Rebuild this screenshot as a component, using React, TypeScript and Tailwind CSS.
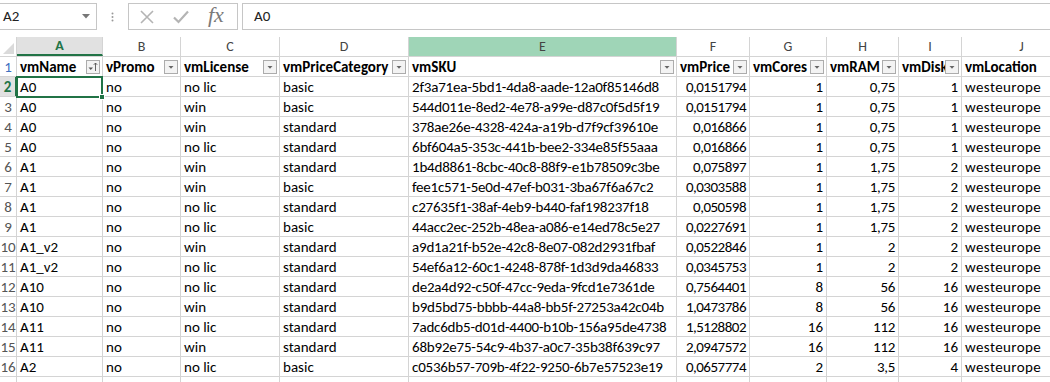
import React from 'react';

type Row = [string, string, string, string, string, string, string, string, string, string];

const rows: Row[] = [
  ['A0', 'no', 'no lic', 'basic', '2f3a71ea-5bd1-4da8-aade-12a0f85146d8', '0,0151794', '1', '0,75', '1', 'westeurope'],
  ['A0', 'no', 'win', 'basic', '544d011e-8ed2-4e78-a99e-d87c0f5d5f19', '0,0151794', '1', '0,75', '1', 'westeurope'],
  ['A0', 'no', 'win', 'standard', '378ae26e-4328-424a-a19b-d7f9cf39610e', '0,016866', '1', '0,75', '1', 'westeurope'],
  ['A0', 'no', 'no lic', 'standard', '6bf604a5-353c-441b-bee2-334e85f55aaa', '0,016866', '1', '0,75', '1', 'westeurope'],
  ['A1', 'no', 'win', 'standard', '1b4d8861-8cbc-40c8-88f9-e1b78509c3be', '0,075897', '1', '1,75', '2', 'westeurope'],
  ['A1', 'no', 'win', 'basic', 'fee1c571-5e0d-47ef-b031-3ba67f6a67c2', '0,0303588', '1', '1,75', '2', 'westeurope'],
  ['A1', 'no', 'no lic', 'standard', 'c27635f1-38af-4eb9-b440-faf198237f18', '0,050598', '1', '1,75', '2', 'westeurope'],
  ['A1', 'no', 'no lic', 'basic', '44acc2ec-252b-48ea-a086-e14ed78c5e27', '0,0227691', '1', '1,75', '2', 'westeurope'],
  ['A1_v2', 'no', 'win', 'standard', 'a9d1a21f-b52e-42c8-8e07-082d2931fbaf', '0,0522846', '1', '2', '2', 'westeurope'],
  ['A1_v2', 'no', 'no lic', 'standard', '54ef6a12-60c1-4248-878f-1d3d9da46833', '0,0345753', '1', '2', '2', 'westeurope'],
  ['A10', 'no', 'no lic', 'standard', 'de2a4d92-c50f-47cc-9eda-9fcd1e7361de', '0,7564401', '8', '56', '16', 'westeurope'],
  ['A10', 'no', 'win', 'standard', 'b9d5bd75-bbbb-44a8-bb5f-27253a42c04b', '1,0473786', '8', '56', '16', 'westeurope'],
  ['A11', 'no', 'no lic', 'standard', '7adc6db5-d01d-4400-b10b-156a95de4738', '1,5128802', '16', '112', '16', 'westeurope'],
  ['A11', 'no', 'win', 'standard', '68b92e75-54c9-4b37-a0c7-35b38f639c97', '2,0947572', '16', '112', '16', 'westeurope'],
  ['A2', 'no', 'no lic', 'basic', 'c0536b57-709b-4f22-9250-6b7e57523e19', '0,0657774', '2', '3,5', '4', 'westeurope'],
];

const fields = ['vmName', 'vPromo', 'vmLicense', 'vmPriceCategory', 'vmSKU', 'vmPrice', 'vmCores', 'vmRAM', 'vmDisk', 'vmLocation'];
const letters = ['A', 'B', 'C', 'D', 'E', 'F', 'G', 'H', 'I', 'J'];
const widths = ['w-[86px]', 'w-[78px]', 'w-[99px]', 'w-[129px]', 'w-[268px]', 'w-[73px]', 'w-[77px]', 'w-[72px]', 'w-[63px]', 'w-[120px]'];
const rightAligned = [false, false, false, false, false, true, true, true, true, false];
// small tracking fixes so Lato lines up with the original widths
const tracking = ['', '', '', '', 'tracking-[-0.2px]', 'tracking-[-0.5px]', '', 'tracking-[-0.3px]', '', 'tracking-[0.4px]'];

const FilterButton: React.FC<{ sorted?: boolean }> = ({ sorted }) => (
  <div className="absolute right-[2px] top-[3px] w-[14px] h-[14px] border border-[#acacac] bg-[#f3f3f3] flex items-center justify-center">
    <svg width="12" height="12" viewBox="0 0 12 12">
      {sorted ? (
        <>
          <path d="M1.5 6.5 L6 6.5 L3.75 9 Z" fill="#555" />
          <path d="M8.5 2 L8.5 10 M6.8 3.8 L8.5 2 L10.2 3.8" stroke="#555" strokeWidth="0.9" fill="none" />
        </>
      ) : (
        <path d="M3.5 5 L8.5 5 L6 7.8 Z" fill="#666" />
      )}
    </svg>
  </div>
);

export default function App() {
  return (
    <div className="w-[1050px] h-[382px] overflow-hidden bg-white font-['Carlito','Lato',sans-serif] text-[15px] text-black">
      {/* formula bar */}
      <div className="flex items-center h-[33px] pt-[3px] pb-[3px]">
        <div className="relative w-[97px] h-[27px] border border-l-0 border-[#c6c6c6] flex items-center pl-[3px] text-[15px] text-[#222]">
          A2
          <svg className="absolute right-[6px] top-[10px]" width="8" height="5" viewBox="0 0 8 5">
            <path d="M0 0 L8 0 L4 4.5 Z" fill="#777" />
          </svg>
        </div>
        <div className="w-[31px] flex justify-center">
          <svg width="3" height="10" viewBox="0 0 3 10">
            <circle cx="1.5" cy="1.5" r="1" fill="#999" />
            <circle cx="1.5" cy="5" r="1" fill="#999" />
            <circle cx="1.5" cy="8.5" r="1" fill="#999" />
          </svg>
        </div>
        <div className="w-[110px] h-[27px] border border-[#c6c6c6] flex items-center pl-[11px] gap-[19px]">
          <svg width="14" height="14" viewBox="0 0 14 14">
            <path d="M1 1 L13 13 M13 1 L1 13" stroke="#b4b4b4" strokeWidth="1.6" />
          </svg>
          <svg width="16" height="14" viewBox="0 0 16 14">
            <path d="M1 7.5 L5.5 12 L15 1.5" stroke="#b4b4b4" strokeWidth="2.2" fill="none" />
          </svg>
          <span className="font-['Liberation_Serif',serif] italic text-[22px] text-[#7a7a7a] leading-none -mt-[4px]">fx</span>
        </div>
        <div className="ml-[4px] flex-1 h-[27px] border border-r-0 border-[#c6c6c6] flex items-center pl-[11px] text-[15px] text-[#222]">
          A0
        </div>
      </div>

      <div className="h-[4px]" />

      {/* grid */}
      <div className="relative">
        {/* column header row */}
        <div className="flex h-[20px] border-b border-[#d4d4d4]">
          <div className="relative w-[17px] shrink-0 border-r border-[#d4d4d4] bg-white">
            <svg className="absolute right-[2px] bottom-[2px]" width="11" height="11" viewBox="0 0 11 11">
              <path d="M11 0 L11 11 L0 11 Z" fill="#dadada" />
            </svg>
          </div>
          {letters.map((l, i) => (
            <div
              key={l}
              className={`${widths[i]} shrink-0 border-r border-[#d4d4d4] flex items-center justify-center text-[14px] ${
                i === 0
                  ? 'bg-[#e1e1e1] text-[#217346] font-bold border-b-2 border-b-[#217346]'
                  : i === 4
                  ? 'bg-[#9fd5b7] text-[#444]'
                  : 'bg-white text-[#444]'
              }`}
            >
              {l}
            </div>
          ))}
        </div>

        {/* field row */}
        <div className="flex h-[20px] border-b border-[#d4d4d4]">
          <div className="w-[17px] shrink-0 border-r border-[#d4d4d4] text-center text-[#3f6fbf] leading-[20px]">1</div>
          {fields.map((f, i) => (
            <div key={f} className={`${widths[i]} relative shrink-0 border-r border-[#d4d4d4] pl-[3px] font-bold leading-[20px] overflow-hidden whitespace-nowrap`}>
              {f}
              <FilterButton sorted={i === 0} />
            </div>
          ))}
        </div>

        {/* data rows */}
        {rows.map((r, ri) => (
          <div key={ri} className="flex h-[20px] border-b border-[#d4d4d4]">
            <div
              className={`w-[17px] shrink-0 text-center leading-[20px] overflow-hidden whitespace-nowrap flex justify-center ${
                ri === 0
                  ? 'bg-[#e1e1e1] text-[#217346] font-bold border-r-2 border-[#217346]'
                  : 'text-[#555] border-r border-[#d4d4d4]'
              }`}
            >
              {ri + 2}
            </div>
            {r.map((v, ci) => (
              <div
                key={ci}
                className={`${widths[ci]} shrink-0 border-r border-[#d4d4d4] leading-[21px] whitespace-nowrap overflow-visible px-[3px] ${
                  rightAligned[ci] ? 'text-right' : 'text-left'
                } ${tracking[ci]}`}
              >
                {v}
              </div>
            ))}
          </div>
        ))}
        <div className="flex h-[20px]">
          <div className="w-[17px] shrink-0 border-r border-[#d4d4d4]" />
          {widths.map((w, ci) => (
            <div key={ci} className={`${w} shrink-0 border-r border-[#d4d4d4]`} />
          ))}
        </div>

        {/* active cell A2 */}
        <div className="absolute left-[16px] top-[39px] w-[87px] h-[22px] border-2 border-[#217346] pointer-events-none" />
        <div className="absolute left-[99px] top-[57px] w-[6px] h-[6px] bg-[#217346] border border-white pointer-events-none" />
      </div>
    </div>
  );
}
